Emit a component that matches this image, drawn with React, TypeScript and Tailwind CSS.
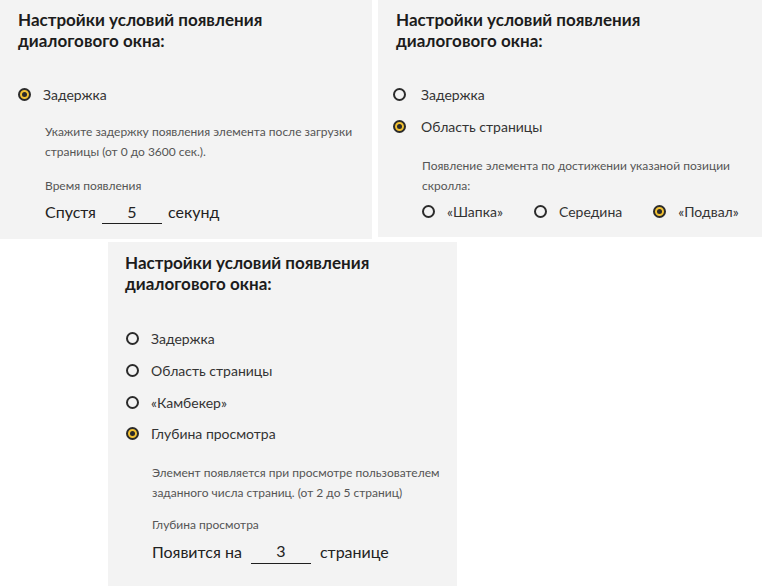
import type { ReactNode } from "react";

function Radio({ checked }: { checked?: boolean }) {
  return (
    <span
      className={
        checked
          ? "flex h-[13px] w-[13px] shrink-0 items-center justify-center rounded-full border-2 border-[#2b2b2b] bg-[#f3c233]"
          : "flex h-[13px] w-[13px] shrink-0 items-center justify-center rounded-full border-2 border-[#2b2b2b]"
      }
    >
      {checked ? <span className="h-[5px] w-[5px] rounded-full bg-[#2b2b2b]" /> : null}
    </span>
  );
}

function Option({
  label,
  checked,
  gap = "gap-[12px]",
  height = "h-8",
}: {
  label: string;
  checked?: boolean;
  gap?: string;
  height?: string;
}) {
  return (
    <label className={`flex ${height} items-center ${gap} text-[14px] text-[#333]`}>
      <Radio checked={checked} />
      <span>{label}</span>
    </label>
  );
}

function Title() {
  return (
    <h2 className="text-[17px] font-bold leading-[21px] text-[#1c1c1c]">
      Настройки условий появления
      <br />
      диалогового окна:
    </h2>
  );
}

function Hint({ children }: { children: ReactNode }) {
  return <p className="text-[12px] leading-5 text-[#555]">{children}</p>;
}

function Field({ value }: { value: string }) {
  return (
    <input
      readOnly
      value={value}
      className="h-6 w-[60px] border-b border-[#1f1f1f] bg-transparent text-center text-[16px] text-[#222] outline-none"
    />
  );
}

export default function App() {
  return (
    <div className="min-h-[586px] bg-white font-['Lato',sans-serif]">
      <div className="flex gap-[6px]">
        {/* Delay */}
        <section className="h-[239px] w-[372px] bg-[#f3f3f3] pl-[18px] pt-[9px]">
          <Title />
          <div className="mt-[27px]">
            <Option label="Задержка" checked />
          </div>
          <div className="ml-[27px] mt-[12px]">
            <Hint>
              Укажите задержку появления элемента после загрузки
              <br />
              страницы (от 0 до 3600 сек.).
            </Hint>
            <div className="mt-[14px]">
              <Hint>Время появления</Hint>
            </div>
            <div className="mt-[4px] flex h-6 items-center gap-[6px] text-[16px] text-[#222]">
              <span>Спустя</span>
              <Field value="5" />
              <span>секунд</span>
            </div>
          </div>
        </section>

        {/* Page area */}
        <section className="h-[237px] w-[384px] bg-[#f3f3f3] pl-[18px] pt-[9px]">
          <Title />
          <div className="-ml-[3px] mt-[27px]">
            <Option label="Задержка" gap="gap-[15px]" />
            <Option label="Область страницы" checked gap="gap-[15px]" />
          </div>
          <div className="ml-[26px] mt-[14px]">
            <Hint>
              Появление элемента по достижении указаной позиции
              <br />
              скролла:
            </Hint>
            <div className="mt-[3px] flex h-6 items-center gap-[31px] text-[14px] text-[#333]">
              <span className="flex items-center gap-[12px]">
                <Radio />
                «Шапка»
              </span>
              <span className="flex items-center gap-[12px]">
                <Radio />
                Середина
              </span>
              <span className="flex items-center gap-[12px]">
                <Radio checked />
                «Подвал»
              </span>
            </div>
          </div>
        </section>
      </div>

      {/* View depth */}
      <section className="ml-[108px] mt-[3px] h-[344px] w-[349px] bg-[#f3f3f3] pl-[17px] pt-[10px]">
        <Title />
        <div className="ml-[1px] mt-[29px]">
          <Option label="Задержка" height="h-[31.7px]" />
          <Option label="Область страницы" height="h-[31.7px]" />
          <Option label="«Камбекер»" height="h-[31.7px]" />
          <Option label="Глубина просмотра" checked height="h-[31.7px]" />
        </div>
        <div className="ml-[27px] mt-[13px]">
          <Hint>
            Элемент появляется при просмотре пользователем
            <br />
            заданного числа страниц. (от 2 до 5 страниц)
          </Hint>
          <div className="mt-[12px]">
            <Hint>Глубина просмотра</Hint>
          </div>
          <div className="mt-[5px] flex h-6 items-center gap-[9px] text-[16px] text-[#222]">
            <span>Появится на</span>
            <Field value="3" />
            <span>странице</span>
          </div>
        </div>
      </section>
    </div>
  );
}
